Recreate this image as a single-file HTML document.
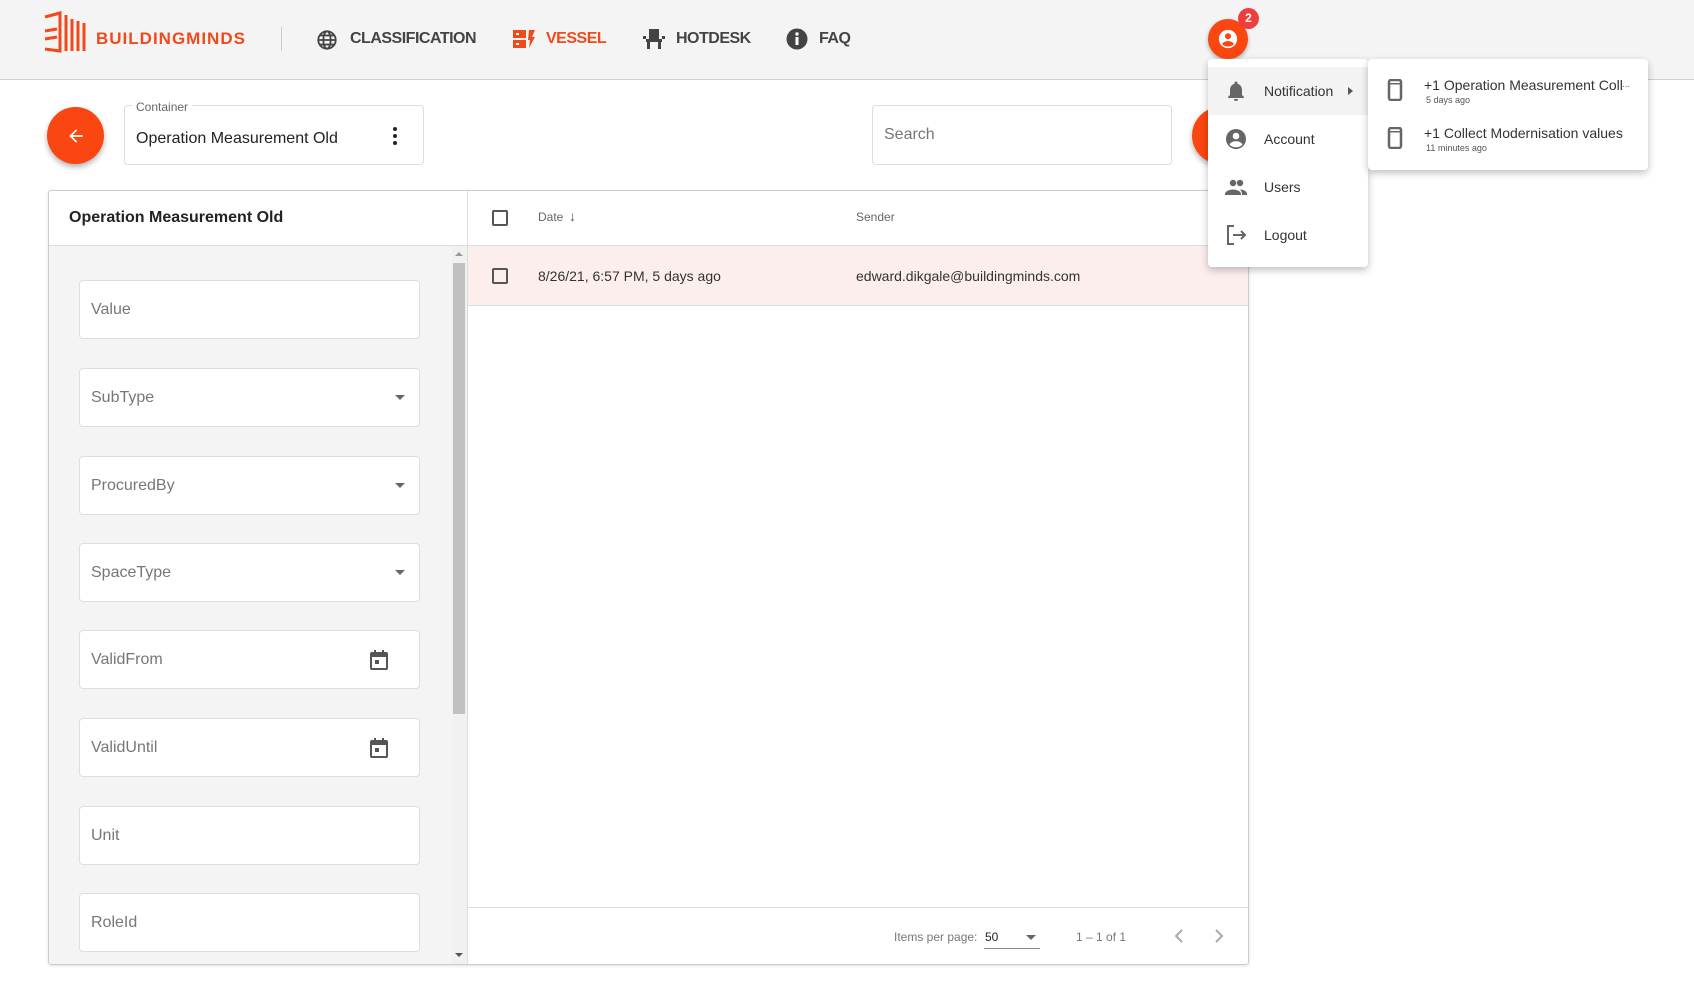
<!DOCTYPE html>
<html><head><meta charset="utf-8">
<style>
*{box-sizing:border-box;margin:0;padding:0}
body{width:1694px;height:999px;background:#fff;font-family:"Liberation Sans",Arial,sans-serif;position:relative;overflow:hidden;color:#333}
.abs{position:absolute}
.hdr{left:0;top:0;width:1694px;height:80px;background:#f4f4f4;border-bottom:1px solid #cfcfcf}
.nav{font-weight:bold;font-size:16px;letter-spacing:-0.5px;color:#444;top:30px}
.field{position:absolute;left:79px;width:341px;height:59px;background:#fff;border:1px solid #dedede;border-radius:4px;font-size:16px;color:#777;padding:20px 11px}
.caret{position:absolute;right:14px;top:26px;width:0;height:0;border-left:5px solid transparent;border-right:5px solid transparent;border-top:5px solid #666}
.mi{position:absolute;left:0;width:160px;height:48px;font-size:14px;color:#333}
.mi span{position:absolute;left:56px;top:16px}
.mi svg{position:absolute;left:16px;top:12px}
</style></head><body>
<div class="abs hdr"></div>
<svg class="abs" style="left:42px;top:11px" width="46" height="42" viewBox="0 0 46 42" fill="none" stroke="#f04a1c" stroke-width="3">
<path d="M3 6 L18 2 L18 40 L3 38"/><path d="M3 20 L15 18"/><path d="M3 28 L15 26"/><path d="M24 4 V40 M30 8 V40 M36 10 V40 M42 12 V40"/>
</svg>
<div class="abs" style="left:96px;top:29px;font-size:17px;font-weight:bold;color:#f04a1c;letter-spacing:1px">BUILDINGMINDS</div>
<div class="abs" style="left:281px;top:27px;width:1px;height:24px;background:#ccc"></div>
<svg class="abs" style="left:316px;top:29px" width="22" height="22" viewBox="0 0 24 24" fill="none" stroke="#444" stroke-width="2"><circle cx="12" cy="12" r="9.5"/><ellipse cx="12" cy="12" rx="4" ry="9.5"/><path d="M2.5 12h19M4 7h16M4 17h16"/></svg>
<div class="abs nav" style="left:350px">CLASSIFICATION</div>
<svg class="abs" style="left:513px;top:29px" width="22" height="20" viewBox="0 0 22 20"><rect x="0" y="1" width="13" height="8" fill="#f04a1c"/><rect x="0" y="11" width="13" height="8" fill="#f04a1c"/><rect x="3" y="4" width="3" height="2" fill="#fff"/><rect x="3" y="14" width="3" height="2" fill="#fff"/><path d="M16 1h6l-3 7h3l-6 11 1-8h-2z" fill="#f04a1c"/></svg>
<div class="abs nav" style="left:546px;color:#f04a1c">VESSEL</div>
<svg class="abs" style="left:643px;top:29px" width="22" height="20" viewBox="0 0 22 20" fill="#444"><rect x="6" y="0" width="10" height="10"/><rect x="3" y="10" width="16" height="3"/><rect x="0" y="7" width="3" height="3"/><rect x="19" y="7" width="3" height="3"/><rect x="4" y="13" width="3" height="7"/><rect x="15" y="13" width="3" height="7"/></svg>
<div class="abs nav" style="left:676px">HOTDESK</div>
<svg class="abs" style="left:786px;top:28px" width="22" height="22" viewBox="0 0 22 22"><circle cx="11" cy="11" r="10.5" fill="#444"/><rect x="9.5" y="9" width="3" height="8" fill="#fff"/><circle cx="11" cy="6" r="1.7" fill="#fff"/></svg>
<div class="abs nav" style="left:819px">FAQ</div>

<div class="abs" style="left:47px;top:107px;width:57px;height:57px;border-radius:50%;background:#fa4610;box-shadow:0 3px 6px rgba(0,0,0,.3)"></div>
<svg class="abs" style="left:66px;top:126px" width="20" height="20" viewBox="0 0 24 24"><path d="M20 11H7.8l5.6-5.6L12 4l-8 8 8 8 1.4-1.4L7.8 13H20z" fill="#fff"/></svg>
<div class="abs" style="left:124px;top:105px;width:300px;height:60px;border:1px solid #ddd;border-radius:4px"></div>
<div class="abs" style="left:132px;top:100px;background:#fff;padding:0 4px;font-size:12px;color:#666">Container</div>
<div class="abs" style="left:136px;top:130px;font-size:16px;color:#222">Operation Measurement Old</div>
<div class="abs" style="left:393px;top:127px;width:4px;height:18px">
<div style="width:4px;height:4px;border-radius:50%;background:#222;margin-bottom:3px"></div><div style="width:4px;height:4px;border-radius:50%;background:#222;margin-bottom:3px"></div><div style="width:4px;height:4px;border-radius:50%;background:#222"></div></div>
<div class="abs" style="left:872px;top:105px;width:300px;height:60px;border:1px solid #ddd;border-radius:4px"></div>
<div class="abs" style="left:884px;top:126px;font-size:16px;color:#777">Search</div>
<div class="abs" style="left:1192px;top:107px;width:57px;height:57px;border-radius:50%;background:#fa4610;box-shadow:0 3px 6px rgba(0,0,0,.3)"></div>

<div class="abs" style="left:48px;top:190px;width:1201px;height:775px;border:1px solid #ccc;border-radius:3px;box-shadow:0 1px 3px rgba(0,0,0,.12)"></div>
<div class="abs" style="left:49px;top:246px;width:418px;height:718px;background:#f4f4f4"></div>
<div class="abs" style="left:467px;top:191px;width:1px;height:773px;background:#ddd"></div>
<div class="abs" style="left:49px;top:245px;width:1199px;height:1px;background:#ddd"></div>
<div class="abs" style="left:69px;top:209px;font-size:16px;font-weight:bold;color:#222">Operation Measurement Old</div>
<div class="abs" style="left:452px;top:246px;width:15px;height:718px;background:#f1f1f1"></div>
<div class="abs" style="left:453px;top:263px;width:12px;height:451px;background:#c1c1c1"></div>
<div class="abs" style="left:455px;top:252px;border-left:4px solid transparent;border-right:4px solid transparent;border-bottom:4px solid #999"></div>
<div class="abs" style="left:455px;top:953px;border-left:4px solid transparent;border-right:4px solid transparent;border-top:4px solid #555"></div>

<div class="field" style="top:280px">Value</div>
<div class="field" style="top:368px">SubType<div class="caret"></div></div>
<div class="field" style="top:456px">ProcuredBy<div class="caret"></div></div>
<div class="field" style="top:543px">SpaceType<div class="caret"></div></div>
<div class="field" style="top:630px">ValidFrom<svg style="position:absolute;right:30px;top:18px" width="20" height="22" viewBox="0 0 20 22"><rect x="2" y="4" width="16" height="16" rx="1" fill="none" stroke="#555" stroke-width="2"/><rect x="2" y="4" width="16" height="4" fill="#555"/><rect x="5" y="1" width="2" height="4" fill="#555"/><rect x="13" y="1" width="2" height="4" fill="#555"/><rect x="6" y="11" width="4" height="4" fill="#555"/></svg></div>
<div class="field" style="top:718px">ValidUntil<svg style="position:absolute;right:30px;top:18px" width="20" height="22" viewBox="0 0 20 22"><rect x="2" y="4" width="16" height="16" rx="1" fill="none" stroke="#555" stroke-width="2"/><rect x="2" y="4" width="16" height="4" fill="#555"/><rect x="5" y="1" width="2" height="4" fill="#555"/><rect x="13" y="1" width="2" height="4" fill="#555"/><rect x="6" y="11" width="4" height="4" fill="#555"/></svg></div>
<div class="field" style="top:806px">Unit</div>
<div class="field" style="top:893px">RoleId</div>

<div class="abs" style="left:492px;top:210px;width:16px;height:16px;border:2px solid #555;border-radius:2px"></div>
<div class="abs" style="left:538px;top:210px;font-size:12px;color:#666">Date</div>
<div class="abs" style="left:569px;top:208px;font-size:14px;color:#555">↓</div>
<div class="abs" style="left:856px;top:210px;font-size:12px;color:#666">Sender</div>
<div class="abs" style="left:468px;top:246px;width:780px;height:60px;background:#fdeeee;border-bottom:1px solid #ddd"></div>
<div class="abs" style="left:492px;top:268px;width:16px;height:16px;border:2px solid #555;border-radius:2px"></div>
<div class="abs" style="left:538px;top:268px;font-size:14px;color:#333">8/26/21, 6:57 PM, 5 days ago</div>
<div class="abs" style="left:856px;top:268px;font-size:14px;color:#333">edward.dikgale@buildingminds.com</div>
<div class="abs" style="left:468px;top:907px;width:780px;height:1px;background:#ddd"></div>
<div class="abs" style="left:894px;top:930px;font-size:12px;color:#777">Items per page:</div>
<div class="abs" style="left:985px;top:930px;font-size:12px;color:#222">50</div>
<div class="abs" style="left:1026px;top:935px;border-left:5px solid transparent;border-right:5px solid transparent;border-top:5px solid #666"></div>
<div class="abs" style="left:984px;top:948px;width:56px;height:1px;background:#888"></div>
<div class="abs" style="left:1076px;top:930px;font-size:12px;color:#777">1 – 1 of 1</div>
<svg class="abs" style="left:1172px;top:927px" width="14" height="18" viewBox="0 0 14 18"><path d="M10 3 L4 9 L10 15" fill="none" stroke="#aaa" stroke-width="2"/></svg>
<svg class="abs" style="left:1212px;top:927px" width="14" height="18" viewBox="0 0 14 18"><path d="M4 3 L10 9 L4 15" fill="none" stroke="#aaa" stroke-width="2"/></svg>

<div class="abs" style="left:1208px;top:19px;width:40px;height:40px;border-radius:50%;background:#fa4610;box-shadow:0 2px 4px rgba(0,0,0,.3)"></div>
<svg class="abs" style="left:1217px;top:28px" width="22" height="22" viewBox="0 0 24 24"><circle cx="12" cy="12" r="10" fill="#fff"/><circle cx="12" cy="9" r="3.3" fill="#fa4610"/><path d="M5.5 17.5c1.5-2.5 4-3.2 6.5-3.2s5 .7 6.5 3.2c-1.6 1.8-4 2.8-6.5 2.8s-4.9-1-6.5-2.8z" fill="#fa4610"/></svg>
<div class="abs" style="left:1238px;top:8px;width:21px;height:21px;border-radius:50%;background:#ef3e3e;color:#fff;font-size:12px;font-weight:bold;text-align:center;line-height:21px">2</div>

<div class="abs" style="left:1208px;top:59px;width:160px;height:208px;background:#fff;border-radius:4px;box-shadow:0 3px 8px rgba(0,0,0,.25)">
<div class="mi" style="top:8px;background:#f3f3f3"><svg width="24" height="24" viewBox="0 0 24 24"><path d="M12 22a2 2 0 0 0 2-2h-4a2 2 0 0 0 2 2zm6-6v-5c0-3.1-1.6-5.6-4.5-6.3V4a1.5 1.5 0 0 0-3 0v.7C7.6 5.4 6 7.9 6 11v5l-2 2v1h16v-1z" fill="#666"/></svg><span>Notification</span><div style="position:absolute;left:140px;top:20px;border-top:4px solid transparent;border-bottom:4px solid transparent;border-left:5px solid #555"></div></div>
<div class="mi" style="top:56px"><svg width="24" height="24" viewBox="0 0 24 24"><circle cx="12" cy="12" r="10" fill="#666"/><circle cx="12" cy="9" r="3.3" fill="#fff"/><path d="M5.5 17.5c1.5-2.5 4-3.2 6.5-3.2s5 .7 6.5 3.2c-1.6 1.8-4 2.8-6.5 2.8s-4.9-1-6.5-2.8z" fill="#fff"/></svg><span>Account</span></div>
<div class="mi" style="top:104px"><svg width="24" height="24" viewBox="0 0 24 24" fill="#666"><circle cx="9" cy="8" r="3.2"/><circle cx="16" cy="8" r="3.2"/><path d="M1 19c0-3 5-4.5 8-4.5s8 1.5 8 4.5v1H1z"/><path d="M16 14.5c3 0 7 1.5 7 4.5v1h-5v-1c0-1.8-1-3.3-2-4.5z"/></svg><span>Users</span></div>
<div class="mi" style="top:152px"><svg width="24" height="24" viewBox="0 0 24 24" fill="none" stroke="#666" stroke-width="2"><path d="M10 3H4v18h6"/><path d="M9 12h12M17 8l4 4-4 4"/></svg><span>Logout</span></div>
</div>
<div class="abs" style="left:1368px;top:59px;width:280px;height:111px;background:#fff;border-radius:4px;box-shadow:0 3px 8px rgba(0,0,0,.25)">
<svg class="abs" style="left:19px;top:20px" width="16" height="22" viewBox="0 0 16 22"><rect x="2" y="1" width="12" height="20" rx="2" fill="none" stroke="#666" stroke-width="2.5"/><rect x="2" y="4" width="12" height="1.5" fill="#666"/></svg>
<div class="abs" style="left:56px;top:18px;font-size:14px;color:#333;white-space:nowrap">+1 Operation Measurement Coll</div>
<div class="abs" style="left:254px;top:20px;font-size:10px;color:#666">...</div>
<div class="abs" style="left:58px;top:36px;font-size:9px;color:#555">5 days ago</div>
<svg class="abs" style="left:19px;top:68px" width="16" height="22" viewBox="0 0 16 22"><rect x="2" y="1" width="12" height="20" rx="2" fill="none" stroke="#666" stroke-width="2.5"/><rect x="2" y="4" width="12" height="1.5" fill="#666"/></svg>
<div class="abs" style="left:56px;top:66px;font-size:14px;color:#333;white-space:nowrap">+1 Collect Modernisation values</div>
<div class="abs" style="left:58px;top:84px;font-size:9px;color:#555">11 minutes ago</div>
</div>
</body></html>
